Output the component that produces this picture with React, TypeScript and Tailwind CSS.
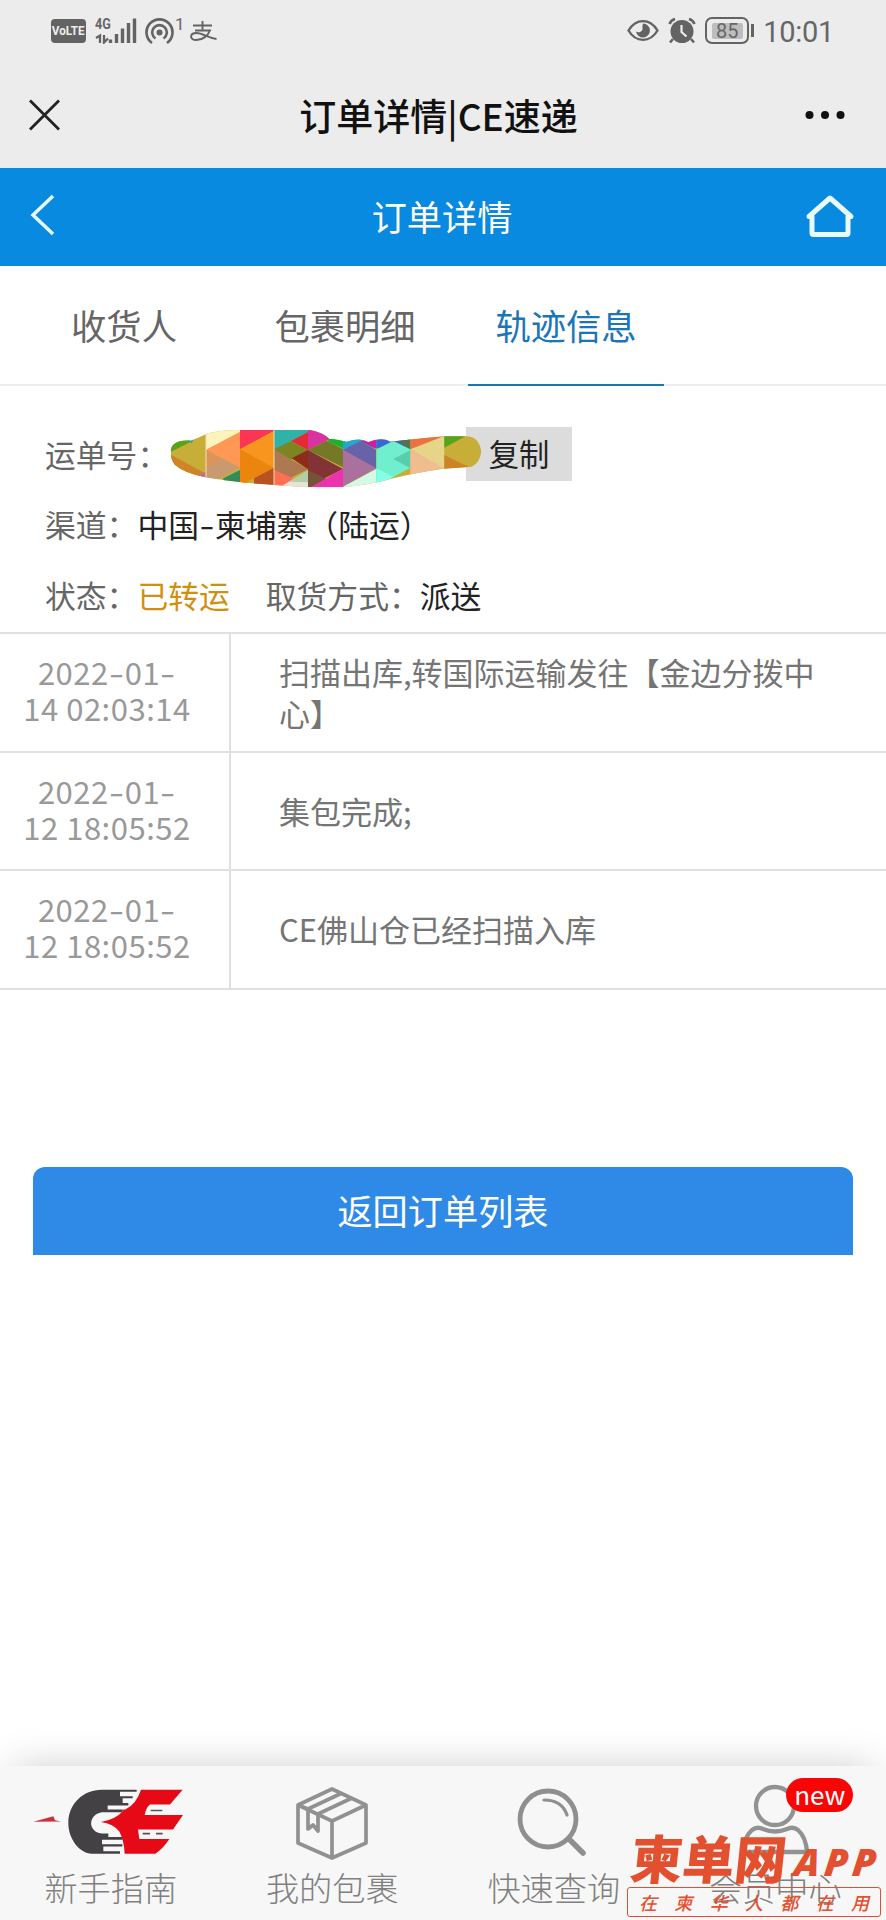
import type { ReactNode } from 'react'

const tabs = ['收货人', '包裹明细', '轨迹信息']

const tracks = [
  { day: '14', time: '02:03:14', text: '扫描出库,转国际运输发往【金边分拨中心】' },
  { day: '12', time: '18:05:52', text: '集包完成;' },
  { day: '12', time: '18:05:52', text: 'CE佛山仓已经扫描入库' },
]

function Dash() {
  return <span className="inline-block w-[16px] scale-x-140 text-center">-</span>
}

function StatusBar() {
  return (
    <div className="flex h-[62px] items-start pl-[51px] pr-[52px] text-[#666]">
      <div className="mt-[19px] flex h-6 w-[35px] items-center justify-center rounded-[4px] bg-[#636363]">
        <span className="scale-x-90 font-['Roboto',sans-serif] text-[13px] font-bold text-[#eee]">VoLTE</span>
      </div>
      <div className="ml-[9px] mt-[17px] flex w-[42px] flex-col">
        <span className="h-[14px] origin-left scale-x-90 font-['Roboto',sans-serif] text-[14px] leading-[14px] font-bold">4G</span>
      </div>
      <svg className="-ml-[42px] mt-[17px] h-[27px] w-[42px]" viewBox="0 0 42 27" fill="none" stroke="#636363">
        <path d="M1 21l4-2.500v7.500M9 18v7.500l4-4" strokeWidth="2.300" />
        <path d="M15.500 22.500v3.500M21.500 17v9M27.500 11.500v14.500M33.500 6v20M39.500 1.500v24.500" strokeWidth="3.400" />
      </svg>
      <svg className="ml-[8px] mt-[17px] h-[28px] w-[30px]" viewBox="0 0 30 28" fill="none" stroke="#636363" strokeWidth="2.600">
        <circle cx="14.500" cy="15.500" r="3" fill="#636363" stroke="none" />
        <path d="M10.500 21.500a7.300 7.300 0 1 1 8 0M7 26a13 13 0 1 1 15 0" />
      </svg>
      <span className="mt-[16px] w-[12px] font-['Roboto',sans-serif] text-[17px] leading-[17px]">1</span>
      <svg className="ml-[3px] mt-[21px] h-[21px] w-[27px]" viewBox="0 0 27 21" fill="none" stroke="#636363" strokeWidth="1.900">
        <path d="M3 4.500h19M12.500 0v9M5 9.500h15c-2 5-7 9.500-13.500 9.500C-1 19-.5 12 6.500 12c6 0 11 4.500 20 6" />
      </svg>
      <div className="ml-auto flex items-start">
        <svg className="mt-[19px] h-[23px] w-[32px]" viewBox="0 0 32 23" fill="none" stroke="#636363" strokeWidth="2.400">
          <path d="M1.500 11.500C9-1 23-1 30.500 11.500 23 24 9 24 1.500 11.500z" />
          <path d="M16 4.500a7 7 0 1 1-7 8c3 2 7 0 6.500-3.500-.2-2 .2-3 .5-4.500z" fill="#636363" stroke="none" />
        </svg>
        <svg className="ml-[9px] mt-[17px] h-[27px] w-[28px]" viewBox="0 0 28 27" fill="none" stroke="#636363" strokeWidth="2.600">
          <circle cx="14" cy="14.500" r="11.500" fill="#636363" stroke="none" />
          <path d="M1.500 7Q3 3 7 2M26.500 7Q25 3 21 2M5 22l-3 3.500M23 22l3 3.500" />
          <path d="M13.500 8v7l5 4.500" stroke="#ececec" strokeWidth="2.200" />
        </svg>
        <div className="ml-[9px] mt-[17px] flex h-[27px] w-[44px] items-center justify-center rounded-[7px] border-[2.5px] border-[#636363]">
          <span className="flex h-[16px] w-[31px] items-center justify-center rounded-[2px] bg-[#bdbdbd] font-['Roboto',sans-serif] text-[20px] leading-none">85</span>
        </div>
        <span className="ml-[2px] mt-[24px] h-[13px] w-[3px] bg-[#636363]" />
        <span className="ml-[9px] mt-[16px] font-['Roboto',sans-serif] text-[29px] leading-[32px] tracking-[-0.3px]">10:01</span>
      </div>
    </div>
  )
}

function TitleBar() {
  return (
    <div className="flex h-[106px] items-center justify-between px-[29px]">
      <svg className="h-[32px] w-[32px]" viewBox="0 0 32 32" stroke="#222" strokeWidth="2.800">
        <path d="M1 1.500l29 29M30 1.500l-29 29" />
      </svg>
      <h1 className="ml-[12px] text-[37px] leading-[50px] font-medium whitespace-nowrap text-[#111]">订单详情|CE速递</h1>
      <svg className="mr-[11px] h-[10px] w-[42px]" viewBox="0 0 42 10" fill="#111">
        <circle cx="5.500" cy="5" r="4" />
        <circle cx="21" cy="5" r="4" />
        <circle cx="36.500" cy="5" r="4" />
      </svg>
    </div>
  )
}

// redaction scribble over the waybill number
function Mosaic() {
  return (
    <svg className="relative mt-[7px] h-[85px] w-[340px] shrink-0" viewBox="0 0 1020 255">
      <clipPath id="blob">
        <path d="M32 110C32 85 55 73 92 77 110 72 125 62 145 55Q190 45 240 45H450Q490 52 508 72C530 72 545 78 560 80 590 73 600 70 625 82 650 72 670 68 690 80Q770 72 850 64H920Q955 64 964 108 960 145 935 155L850 161Q770 172 700 190 640 208 550 217H445Q330 208 260 204 190 196 138 187 75 176 45 150 32 135 32 110z" />
      </clipPath>
      <g clipPath="url(#blob)">
        <rect width="1020" height="255" fill="#c7ae38" />
        <path d="M30 60h60v22l-60 30z" fill="#58a31c" />
        <path d="M75 70l30-5-10 20z" fill="#2a9fc0" />
        <path d="M30 118l108 58v20H30z" fill="#cf8427" />
        <path d="M105 187l33-17v20z" fill="#ba6fa0" />
        <path d="M138 40h102v11l-102 54z" fill="#fcf3bd" />
        <path d="M138 105l102-54v107z" fill="#ff9854" />
        <path d="M138 105l102 53-102 55z" fill="#c99a6f" />
        <path d="M138 105l50 27-50 25z" fill="#dc945c" />
        <path d="M190 190l50-25v45h-50z" fill="#308c5a" />
        <path d="M240 40h102v8l-102 55z" fill="#fb3655" />
        <path d="M240 103l102-55v110z" fill="#f7951f" />
        <path d="M240 103l102 55-102 54z" fill="#ec850d" />
        <path d="M282 190l60-32v60h-60z" fill="#b85220" />
        <path d="M342 45h102v7l-102 53z" fill="#30b2a9" />
        <path d="M393 78l51-27v55z" fill="#e42939" />
        <path d="M342 103l51-25 51 28-102 55z" fill="#7d8422" />
        <path d="M342 103l102 60-102 50z" fill="#ad7950" />
        <path d="M395 130l49-25v58z" fill="#8d2c1b" />
        <path d="M342 165l70 30-50 25h-20z" fill="#ff7052" />
        <path d="M444 167v55h-95z" fill="#e9e2d7" />
        <path d="M385 200l59-33v35z" fill="#b5ceaa" />
        <path d="M444 45h66v27l-66 33z" fill="#da32a1" />
        <path d="M505 70h44v30l-44-20z" fill="#15b331" />
        <path d="M444 105l55-28 50 25v55z" fill="#757827" />
        <path d="M444 105l105 57-70 35-35-25z" fill="#833235" />
        <path d="M444 165l55 27-55 30z" fill="#785238" />
        <path d="M549 160v60h-100z" fill="#ed32ae" />
        <path d="M549 65h100v35l-100 5z" fill="#23a7d2" />
        <path d="M600 78l49-3v26z" fill="#d719a0" />
        <path d="M549 105l51-26 49 26v57z" fill="#6863a9" />
        <path d="M549 105l100 55-100 55z" fill="#aa719f" />
        <path d="M549 215l100-53v60z" fill="#d5f9e7" />
        <path d="M649 65h102v40l-102-5z" fill="#3967d6" />
        <path d="M700 70h51v34z" fill="#53724e" />
        <path d="M649 103l51-25 51 25v55l-51 28-51 18z" fill="#70efcf" />
        <path d="M700 132l51-27v55z" fill="#5acdac" />
        <path d="M649 160l51 25-51 35z" fill="#84ffe6" />
        <path d="M751 65h102v5l-102 33z" fill="#e87341" />
        <path d="M751 103l102-40v100z" fill="#e6d588" />
        <path d="M751 103l102 57-102 27z" fill="#f0bd91" />
        <path d="M853 60h70l-70 38z" fill="#56a31c" />
        <path d="M853 120l75 37-75 10z" fill="#ce8327" />
        <path d="M138 40v180M342 40v180" stroke="#f7ddb0" strokeWidth="3" />
      </g>
    </svg>
  )
}

function OrderInfo() {
  return (
    <section className="flex h-[246px] flex-col pt-[29px] pl-[45px] text-[30.8px] leading-[70px] whitespace-nowrap text-[#666]">
      <div className="flex h-[78px] items-center">
        <span className="w-[115px]">运单号：</span>
        <Mosaic />
        <span className="-ml-[34px] flex h-[54px] w-[106px] items-center justify-center bg-[#dcdcdc] pb-[2px] text-[30.300px] text-[#222]">复制</span>
      </div>
      <div className="-mt-[4px] h-[71px] text-[#222]">
        <span className="text-[#666]">渠道：</span>中国<Dash />柬埔寨（陆运）
      </div>
      <div className="flex">
        <span>状态：</span>
        <span className="text-[#d0900f]">已转运</span>
        <span className="ml-[36px]">取货方式：</span>
        <span className="text-[#222]">派送</span>
      </div>
    </section>
  )
}

function CeLogo() {
  return (
    <svg className="mt-[6px] -ml-[2px] h-[102px] w-[180px] shrink-0" viewBox="0 0 540 300" preserveAspectRatio="none">
      <path d="M40 158l60-16 5 12 18 3z" fill="#c8323c" />
      <path d="M245 64h105v6h-50v13h38v6h-30v14h17v7h-62v12h44v8h-62c-42 8-42 57 0 63h20v10h43v8h-62v13h61v7h-57v14h50v7H215C180 252 145 210 145 162 145 105 190 64 245 64z" fill="#434143" />
      <path d="M363 64h125l-38 43h-60q-12 8-16 31h115l-30 43H354l4 28h90q-18 28-42 43h-92q-2-40-16-65-18-23-55-28 45-9 65-32l-2-4 10-1q33-15 47-58z" fill="#e60a17" />
      <path d="M392 125h35M368 193h22M408 193h20" stroke="#555" strokeWidth="5" />
    </svg>
  )
}

function BoxIcon() {
  return (
    <svg className="mt-[14px] h-[76px] w-[76px]" viewBox="0 0 76 76" fill="none" stroke="#919191" strokeWidth="3.700" strokeLinejoin="round">
      <path d="M38 4l34 16v38L38 73 4 58V20zM4 20l34 16 34-16M38 36v37" />
      <path d="M14 24v20l5-4 5 6V29M14 24l34-16M24 29l34-16M4 20l10 4" />
    </svg>
  )
}

function SearchIcon() {
  return (
    <svg className="mt-[10px] -ml-[7px] h-[72px] w-[72px]" viewBox="0 0 72 72" fill="none" stroke="#8f8f8f" strokeLinecap="round">
      <circle cx="34" cy="34" r="28" strokeWidth="4.800" />
      <path d="M30 15q18 0 23 15" strokeWidth="3.200" />
      <path d="M55 54l14 14" strokeWidth="5.500" />
    </svg>
  )
}

function UserIcon() {
  return (
    <svg className="h-[72px] w-[70px]" viewBox="0 0 70 72" fill="none" stroke="#929292" strokeWidth="4.300">
      <circle cx="35" cy="22" r="19" />
      <path d="M3 68q1-15 9-22 5-4 11-1 12 5 24 0 6-3 11 1 8 7 9 22z" strokeLinejoin="round" />
    </svg>
  )
}

function NavItem({ label, children }: { label: string; children: ReactNode }) {
  return (
    <div className="flex flex-1 flex-col items-center">
      <div className="flex h-[100px] items-center justify-center">{children}</div>
      <span className="-mt-px text-[33.200px] leading-[44px] font-light text-[#808080]">{label}</span>
    </div>
  )
}

function Watermark() {
  return (
    <div className="absolute top-[1826px] left-[627px] w-[254px] text-[#e35030]">
      <div className="flex h-[61px] -skew-x-6 items-center pl-[4px] leading-none whitespace-nowrap">
        <span className="text-[52px] font-black">柬单网</span>
        <span className="mt-[9px] ml-[8px] font-['Open_Sans',sans-serif] text-[38px] font-extrabold tracking-[4.5px] italic">APP</span>
      </div>
      <div className="flex h-[30px] items-center justify-between rounded-[3px] border border-[#e35030] px-[11px] text-[18px] leading-none font-medium italic">
        {[...'在柬华人都在用'].map((c, i) => (
          <span key={i}>{c}</span>
        ))}
      </div>
    </div>
  )
}

export default function App() {
  return (
    <main className="relative flex h-[1920px] w-[886px] flex-col overflow-hidden bg-white font-['Noto_Sans_CJK_SC',sans-serif]">
      <header className="bg-[#ececec]">
        <StatusBar />
        <TitleBar />
      </header>
      <div className="flex h-[98px] items-center justify-between bg-[#078ae0] pr-[31px] pl-[30px]">
        <svg className="mb-[4px] h-[42px] w-[49px]" viewBox="0 0 49 42" fill="none" stroke="#e8fcff" strokeWidth="3.500">
          <path d="M23 2L3 21l20 19" />
        </svg>
        <h2 className="mb-[3px] text-[35.200px] leading-none text-white">订单详情</h2>
        <svg className="mb-[2px] h-[44px] w-[50px]" viewBox="0 0 50 44" fill="none" stroke="#e9faff" strokeWidth="5" strokeLinejoin="round">
          <path d="M7 22.500H4L25 4l21 18.500h-3V39q0 1.500-1.500 1.500h-33Q7 40.500 7 39z" />
        </svg>
      </div>
      <nav className="flex h-[120px] gap-[25px] border-b-2 border-[#ededed] pl-[26px]">
        {tabs.map((tab, i) => (
          <div
            key={tab}
            className={
              i === 2
                ? 'h-[120px] w-[196px] border-b-2 border-[#1a76ae] text-center text-[35.300px] leading-[117px] text-[#1a76b8]'
                : 'w-[196px] text-center text-[35.300px] leading-[117px] text-[#666]'
            }
          >
            {tab}
          </div>
        ))}
      </nav>
      <OrderInfo />
      <section className="border-t-2 border-[#e0e0e0]">
        {tracks.map((track, i) => (
          <div key={i} className="flex h-[118.5px] border-b-2 border-[#e0e0e0]">
            <div className="flex w-[231px] flex-col items-center justify-center border-r-2 border-[#e0e0e0] pr-[15px] pb-[4px] text-[31px] leading-[36px] tracking-[0.5px] text-[#999]">
              <span>2022<Dash />01<Dash /></span>
              <span>{track.day} {track.time}</span>
            </div>
            <div className="flex flex-1 items-center pr-[70px] pb-px pl-[48px] text-[31px] leading-[41px] text-[#757575]">
              {track.text}
            </div>
          </div>
        ))}
      </section>
      <button className="mx-[33px] mt-[177px] h-[88px] rounded-t-[12px] bg-[#2e8ae6] text-[35.200px] text-white">
        返回订单列表
      </button>
      <footer className="mt-auto flex h-[154px] bg-[#f7f7f7] shadow-[0_-8px_40px_-12px_rgba(0,0,0,0.22)]">
        <NavItem label="新手指南">
          <CeLogo />
        </NavItem>
        <NavItem label="我的包裹">
          <BoxIcon />
        </NavItem>
        <NavItem label="快速查询">
          <SearchIcon />
        </NavItem>
        <NavItem label="会员中心">
          <div className="relative mt-[8px]">
            <UserIcon />
            <span className="absolute -top-[6px] left-[46px] flex h-[34px] w-[67px] items-center justify-center rounded-full bg-[#fa0505] pb-[2px] text-[26px] leading-none text-white">new</span>
          </div>
        </NavItem>
      </footer>
      <Watermark />
    </main>
  )
}
